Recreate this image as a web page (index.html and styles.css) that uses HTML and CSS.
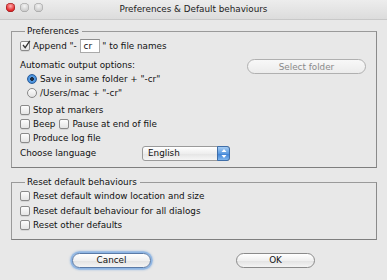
FILE: index.html
```html
<!DOCTYPE html>
<html>
	<head>
		<meta charset="utf-8">
		<title>Preferences &amp; Default behaviours</title>
		<link rel="stylesheet" href="styles.css">
	</head>
	<body>
		<div class="window">
			<div class="titlebar">
				<div class="lights">
					<i class="light red"></i>
					<i class="light"></i>
					<i class="light"></i>
				</div>
				<div class="title">Preferences &amp; Default behaviours</div>
			</div>

			<div class="content">
				<fieldset class="group prefs">
					<legend>Preferences</legend>
					<div class="row append">
						<span class="check checked">
							<svg width="10" height="10" viewBox="0 0 10 10"><path d="M2 5 L4.2 7.6 L8.8 0.8" fill="none" stroke="#333" stroke-width="1.3"/></svg>
						</span>
						Append "-&nbsp;<span class="field">cr</span>&nbsp;" to file names
					</div>
					<div class="output">
						<div class="output-opts">
							<div class="row">Automatic output options:</div>
							<div class="row indent"><span class="radio on"></span>Save in same folder + "-cr"</div>
							<div class="row indent"><span class="radio"></span>/Users/mac + "-cr"</div>
						</div>
						<button class="pill select" disabled>Select folder</button>
					</div>
					<div class="row spaced"><span class="check"></span>Stop at markers</div>
					<div class="row"><span class="check"></span>Beep <span class="check second"></span>Pause at end of file</div>
					<div class="row"><span class="check"></span>Produce log file</div>
					<div class="row lang">
						<span class="lang-label">Choose language</span>
						<span class="popup">
							English
							<span class="arrows">
								<svg width="8" height="11" viewBox="0 0 8 11"><path d="M4 1 L6.5 4 L1.5 4 Z M4 10 L6.5 7 L1.5 7 Z" fill="#fff"/></svg>
							</span>
						</span>
					</div>
				</fieldset>

				<fieldset class="group resets">
					<legend>Reset default behaviours</legend>
					<div class="row"><span class="check"></span>Reset default window location and size</div>
					<div class="row"><span class="check"></span>Reset default behaviour for all dialogs</div>
					<div class="row"><span class="check"></span>Reset other defaults</div>
				</fieldset>

				<div class="buttons">
					<button class="pill focus">Cancel</button>
					<button class="pill">OK</button>
				</div>
			</div>
		</div>
	</body>
</html>
```

FILE: styles.css
```css
*{
	margin: 0;
	padding: 0;
	box-sizing: border-box;
}
body{
	background: #e8e8e8;
	font-family: "DejaVu Sans", Verdana, sans-serif;
	font-size: 8.8px;
	color: #111;
}
.window{
	width: 387px;
	height: 280px;
	background: #e8e8e8;
}
.titlebar{
	height: 20px;
	position: relative;
	background: linear-gradient(#ededed, #dcdcdc);
	border-bottom: 1px solid #c8c8c8;
}
.lights{
	position: absolute;
	left: 6px;
	top: 3px;
	display: flex;
	gap: 5px;
}
.light{
	width: 9px;
	height: 9px;
	border-radius: 50%;
	background: radial-gradient(circle at 50% 35%, #f4f4f4, #c9c9c9 70%, #a8a8a8);
	box-shadow: inset 0 0 0 0.5px #999;
}
.light.red{
	background: radial-gradient(circle at 50% 35%, #ffb0b0, #e2282a 60%, #a0101a);
	box-shadow: inset 0 0 0 0.5px #8a1a1a;
}
.title{
	text-align: center;
	line-height: 18px;
	color: #222;
}
.content{
	padding: 5px 10px 0 11px;
}
.group{
	border: 1px solid #9a9a9a;
	border-right-color: #8a8a8a;
	border-bottom-color: #7e7e7e;
	padding: 0 10px 6px 8px;
}
.group legend{
	margin-left: 5px;
	padding: 0 3px 0 2px;
	line-height: 13px;
}
.row{
	display: flex;
	align-items: center;
	height: 14px;
	white-space: nowrap;
}
.append{
	height: 15px;
}
.field{
	display: inline-block;
	width: 20px;
	height: 14px;
	line-height: 13px;
	background: #fff;
	border: 1px solid #aaa;
	border-top-color: #8d8d8d;
	padding-left: 3px;
}
.check{
	display: inline-flex;
	width: 10px;
	height: 10px;
	margin-right: 3px;
	border: 1px solid #8a8a8a;
	border-radius: 2px;
	background: linear-gradient(#fdfdfd, #e4e4e4);
	box-shadow: 0 1px 0 rgba(0,0,0,0.08);
}
.check svg{
	margin: -2px 0 0 0;
	flex: none;
}
.check.second{
	margin-left: 4px;
}
.output{
	display: flex;
	justify-content: space-between;
	align-items: flex-start;
	margin-top: 5px;
}
.indent{
	padding-left: 7px;
}
.radio{
	display: inline-block;
	width: 10px;
	height: 10px;
	margin-right: 3px;
	border-radius: 50%;
	border: 1px solid #888;
	background: linear-gradient(#fdfdfd, #e2e2e2);
}
.radio.on{
	border-color: #2a5d9a;
	background: radial-gradient(circle, #1c2d44 0 1.6px, #5aa0e6 2.2px, #2f76c8 100%);
}
.pill{
	font-family: inherit;
	font-size: 8.8px;
	color: #111;
	height: 15px;
	border: 1px solid #8a8a8a;
	border-radius: 8px;
	background: linear-gradient(#ffffff, #f0f0f0 50%, #e2e2e2 51%, #f4f4f4);
}
.select{
	width: 119px;
	margin-top: 1px;
	color: #8a8a8a;
	border-color: #b0b0b0;
	background: linear-gradient(#f8f8f8, #ececec);
}
.spaced{
	margin-top: 3px;
}
.lang{
	height: 16px;
}
.lang-label{
	width: 122px;
}
.popup{
	position: relative;
	display: flex;
	align-items: center;
	width: 88px;
	height: 15px;
	padding-left: 5px;
	border: 1px solid #9a9a9a;
	border-radius: 3px;
	background: linear-gradient(#ffffff, #eeeeee 50%, #e4e4e4 51%, #f6f6f6);
}
.arrows{
	position: absolute;
	right: -1px;
	top: -1px;
	width: 13px;
	height: 15px;
	display: flex;
	align-items: center;
	justify-content: center;
	border-radius: 0 3px 3px 0;
	border: 1px solid #3f6ea8;
	background: linear-gradient(#a7cdf4, #5b9ae0 50%, #3b7fd4 51%, #7fb6ee);
}
.resets{
	margin-top: 9px;
	padding-bottom: 6px;
}
.resets legend{
	line-height: 11px;
	margin-bottom: 1px;
}
.resets .row{
	height: 14.5px;
}
.buttons{
	display: flex;
	margin-top: 13px;
	padding-left: 61px;
	gap: 85px;
}
.buttons .pill{
	width: 79px;
}
.focus{
	box-shadow: 0 0 0 1.5px #8fb6e4, 0 0 2px 2px rgba(110,160,220,0.6);
	border-color: #5a7aa6;
}
```
